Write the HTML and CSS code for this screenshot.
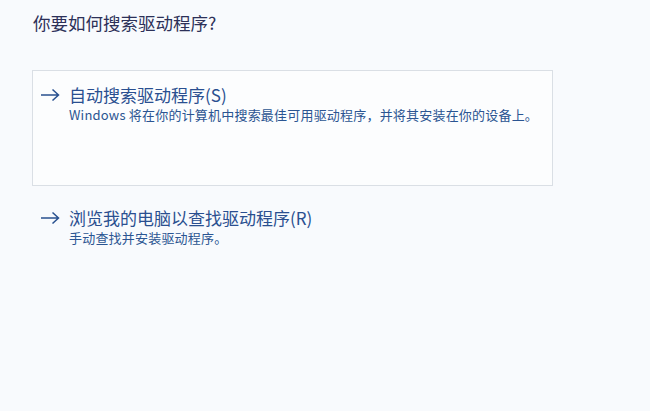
FILE: index.html
```html
<!DOCTYPE html>
<html lang="zh-CN">
<head>
<meta charset="utf-8">
<title>更新驱动程序</title>
<link rel="stylesheet" href="styles.css">
</head>
<body>
<div class="page">
  <h1 class="title">你要如何搜索驱动程序?</h1>
  <div class="option option-card">
    <div class="option-row">
      <svg class="arrow" width="20" height="14" viewBox="0 0 20 14"><path d="M1 7H18.5M12.5 1.5L18.5 7L12.5 12.5" fill="none" stroke="#28508f" stroke-width="1.5"/></svg>
      <span class="option-title">自动搜索驱动程序(S)</span>
    </div>
    <div class="option-desc">Windows 将在你的计算机中搜索最佳可用驱动程序，并将其安装在你的设备上。</div>
  </div>
  <div class="option option-plain">
    <div class="option-row">
      <svg class="arrow" width="20" height="14" viewBox="0 0 20 14"><path d="M1 7H18.5M12.5 1.5L18.5 7L12.5 12.5" fill="none" stroke="#28508f" stroke-width="1.5"/></svg>
      <span class="option-title">浏览我的电脑以查找驱动程序(R)</span>
    </div>
    <div class="option-desc">手动查找并安装驱动程序。</div>
  </div>
</div>
</body>
</html>
```

FILE: styles.css
```css
html, body {
  margin: 0;
  padding: 0;
}
body {
  background: #f8fafd;
  font-family: "Noto Sans CJK SC", "Noto Sans", sans-serif;
  width: 650px;
  height: 411px;
  overflow: hidden;
}
.page {
  padding: 11px 0 0 32px;
}
.title {
  margin: 0 0 0 1px;
  font-size: 17.5px;
  line-height: 24px;
  font-weight: normal;
  color: #2c3058;
}
.option {
  box-sizing: border-box;
  width: 521px;
  padding-left: 7px;
}
.option-card {
  margin-top: 35px;
  height: 116px;
  padding-top: 13px;
  border: 1px solid #dadfe5;
  background: #fcfdfe;
}
.option-plain {
  margin-top: 21px;
  padding-left: 8px;
}
.option-row {
  display: flex;
  align-items: center;
  height: 22px;
}
.arrow {
  display: block;
  flex: none;
  margin-right: 9px;
}
.option-title {
  font-size: 17px;
  line-height: 22px;
  color: #2a4f90;
}
.option-desc {
  margin-left: 29px;
  font-size: 13px;
  line-height: 18px;
  color: #2b5592;
  letter-spacing: 0.2px;
}
```
